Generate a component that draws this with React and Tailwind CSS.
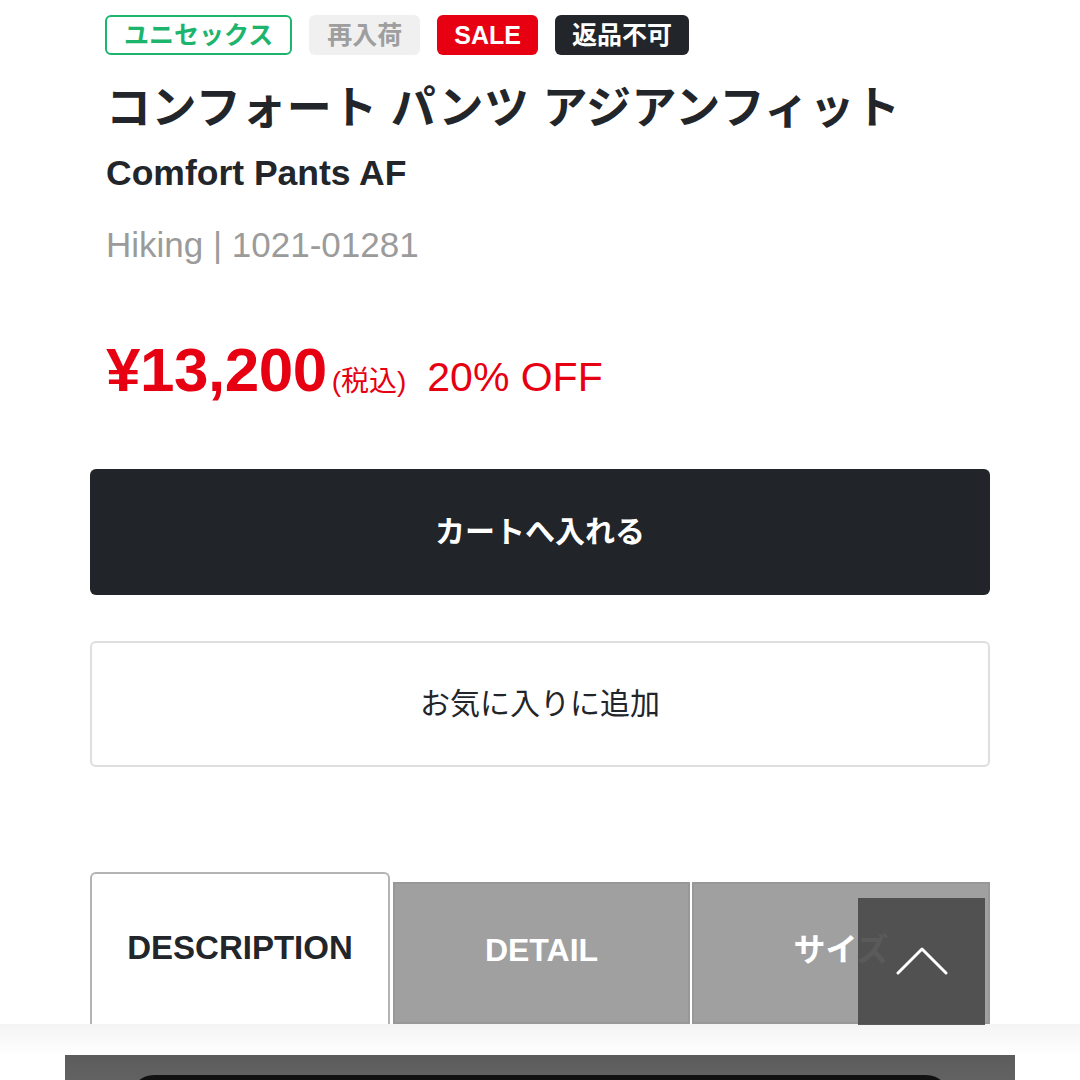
import React from 'react';

const Badge = ({ children, className }) => (
  <span className={`flex h-[40px] items-center rounded-[6px] px-[17px] text-[25px] font-bold leading-none ${className}`}>
    {children}
  </span>
);

const ChevronUp = () => (
  <svg width="52" height="30" viewBox="0 0 52 30" fill="none">
    <path d="M2 27 L26 3 L50 27" stroke="white" strokeWidth="3" strokeLinecap="round" strokeLinejoin="round" />
  </svg>
);

export default function App() {
  return (
    <div
      className="relative h-[1080px] w-[1080px] overflow-hidden bg-white text-[#222529]"
      style={{ fontFamily: '"Liberation Sans", "Noto Sans CJK JP", sans-serif' }}
    >
      <div className="mx-[90px] w-[900px]">
        {/* labels */}
        <div className="mt-[15px] flex gap-[17px] pl-[15px]">
          <Badge className="border-2 border-[#1db56d] px-[15px] text-[#1db56d]">ユニセックス</Badge>
          <Badge className="bg-[#f0f0f0] px-[18px] text-[#9e9e9e]">再入荷</Badge>
          <Badge className="bg-[#e60012] text-white">SALE</Badge>
          <Badge className="bg-[#222529] text-white">返品不可</Badge>
        </div>

        {/* product info */}
        <div className="pl-[16px]">
          <h1 className="mt-[26px] text-[45px] font-bold leading-[56px] tracking-[0.5px]">
            コンフォート パンツ アジアンフィット
          </h1>
          <p className="mt-[14px] text-[35.5px] font-bold leading-[44px]">Comfort Pants AF</p>
          <p className="mt-[28px] text-[35px] leading-[44px] text-[#9b9b9b]">Hiking | 1021-01281</p>

          <div className="mt-[68px] flex items-baseline text-[#e60012]">
            <span className="text-[62px] font-bold leading-[70px] tracking-[-0.5px]">¥13,200</span>
            <span className="ml-[5px] text-[28px]">(税込)</span>
            <span className="ml-[21px] text-[41px]">20% OFF</span>
          </div>
        </div>

        {/* actions */}
        <button className="mt-[60px] flex h-[126px] w-full items-center justify-center rounded-[6px] bg-[#212428] text-[30px] font-bold text-white">
          カートへ入れる
        </button>
        <button className="mt-[46px] flex h-[126px] w-full items-center justify-center rounded-[6px] border-2 border-[#dedede] bg-white text-[30px] text-[#222529]">
          お気に入りに追加
        </button>

        {/* tabs */}
        <div className="relative mt-[105px] flex h-[152px] items-end">
          <div className="flex h-[152px] w-[300px] items-center justify-center rounded-t-[6px] border-2 border-b-0 border-[#b4b4b4] bg-white pb-[2px] text-[33px] font-bold">
            DESCRIPTION
          </div>
          <div className="ml-[3px] flex h-[142px] w-[297px] items-center justify-center border-2 border-[#989898] bg-[#a0a0a0] pb-[6px] text-[32px] font-bold text-white">
            DETAIL
          </div>
          <div className="ml-[2px] flex h-[142px] flex-1 items-center justify-center border-2 border-[#989898] bg-[#a0a0a0] pb-[6px] text-[32px] font-bold text-white">
            サイズ
          </div>

          {/* back to top */}
          <button className="absolute right-[5px] top-[26px] flex h-[127px] w-[127px] items-center justify-center bg-[#484848]/90">
            <ChevronUp />
          </button>
        </div>
      </div>

      {/* bottom sheet */}
      <div className="h-[31px] bg-gradient-to-b from-[#f4f4f4] to-white" />
      <div className="mx-[65px] h-[40px] bg-gradient-to-b from-[#5c5c5c] to-[#666666] pt-[20px]">
        <div className="mx-[65px] h-[40px] rounded-t-[24px] bg-[#111111]" />
      </div>
    </div>
  );
}
